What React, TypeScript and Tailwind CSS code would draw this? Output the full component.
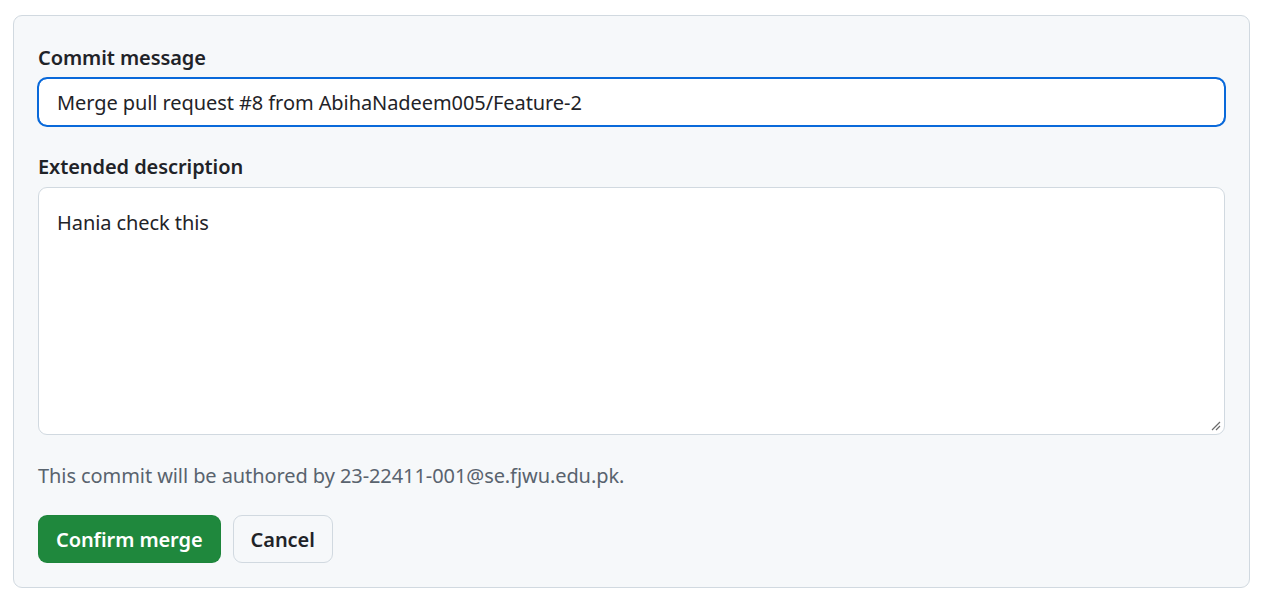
import React from 'react';

const font = { fontFamily: '"Noto Sans", "Liberation Sans", sans-serif', letterSpacing: '-0.08px' };

export default function App() {
  return (
    <div className="w-[1271px] h-[607px] bg-white pt-[15px] pl-[13px]" style={font}>
      <div className="w-[1237px] h-[573px] bg-[#f6f8fa] border border-[#d1d9e0] rounded-[9px] p-6 flex flex-col">
        <label className="mt-[2px] text-[20px] leading-[32px] font-semibold text-[#1f2328]">Commit message</label>
        <div className="mt-[4px] h-[48px] bg-white border border-[#0969da] outline-2 outline-[#0969da] outline-offset-[-1px] rounded-[9px] flex items-center px-[18px] pt-[1px] text-[20px] text-[#1f2328]">
          Merge pull request #8 from AbihaNadeem005/Feature-2
        </div>

        <label className="mt-[25px] text-[20px] leading-[32px] font-semibold text-[#1f2328]">Extended description</label>
        <div className="relative mt-[4px] h-[248px] bg-white border border-[#d1d9e0] rounded-[9px] px-[18px] pt-[19px] text-[20px] leading-[32px] text-[#1f2328]">
          Hania check this
          <svg className="absolute right-[3px] bottom-[3px]" width="10" height="10" viewBox="0 0 10 10">
            <path d="M9 1 L1 9 M9 5 L5 9" stroke="#6b6b6b" strokeWidth="1.2" fill="none" />
          </svg>
        </div>

        <p className="mt-[25px] text-[20px] leading-[32px] text-[#59636e]">
          This commit will be authored by 23-22411-001@se.fjwu.edu.pk.
        </p>

        <div className="mt-[23px] flex gap-3">
          <button className="h-[48px] px-[17px] pt-[2px] rounded-[9px] bg-[#1f883d] text-white text-[20px] font-semibold border border-[#1a7f37]/20">
            Confirm merge
          </button>
          <button className="h-[48px] px-[17px] pt-[2px] rounded-[9px] bg-[#f6f8fa] text-[#1f2328] text-[20px] font-semibold border border-[#d1d9e0]">
            Cancel
          </button>
        </div>
      </div>
    </div>
  );
}
